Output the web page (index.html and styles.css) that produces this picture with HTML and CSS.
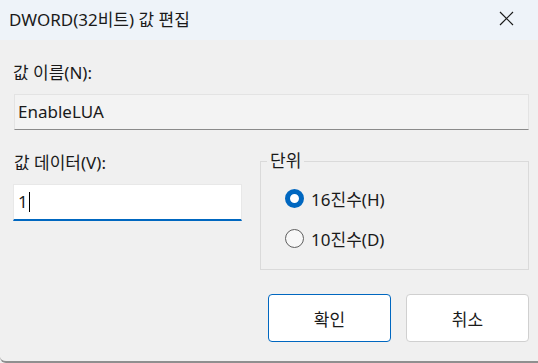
FILE: index.html
```html
<!DOCTYPE html>
<html lang="ko">
<head>
  <meta charset="UTF-8">
  <title>DWORD(32비트) 값 편집</title>
  <link rel="stylesheet" href="styles.css">
</head>
<body>
  <div class="dialog">
    <div class="titlebar">
      <span class="title">DWORD(32비트) 값 편집</span>
      <svg class="close" width="15" height="15" viewBox="0 0 15 15">
        <path d="M1 1 L14 14 M14 1 L1 14" stroke="#1a1a1a" stroke-width="1.2" fill="none"/>
      </svg>
    </div>

    <div class="content">
      <div class="label">값 이름(N):</div>
      <div class="field readonly">EnableLUA</div>

      <div class="row">
        <div class="data-col">
          <div class="label">값 데이터(V):</div>
          <div class="field edit">1<span class="caret"></span></div>
        </div>

        <fieldset class="group">
          <legend>단위</legend>
          <div class="radio checked"><span class="dot"></span>16진수(H)</div>
          <div class="radio"><span class="dot"></span>10진수(D)</div>
        </fieldset>
      </div>

      <div class="buttons">
        <button class="btn primary">확인</button>
        <button class="btn">취소</button>
      </div>
    </div>
  </div>
</body>
</html>
```

FILE: styles.css
```css
html, body {
  margin: 0;
  padding: 0;
}

body {
  width: 538px;
  height: 363px;
  overflow: hidden;
  background-color: #f0f0f0;
  font-family: "Noto Sans", "Noto Sans CJK KR", sans-serif;
  font-size: 17px;
  color: #1a1a1a;
}

.dialog {
  height: 361px;
  background-color: #f0f0f0;
  border-bottom: 2px solid #8f8f8f;
  border-radius: 0 0 0 6px;
}

.titlebar {
  height: 40px;
  background-color: #eef3f9;
  display: flex;
  align-items: center;
  justify-content: space-between;
  padding: 0 24px 0 9px;
}

.title {
  font-size: 17px;
  margin-top: -3px;
}

.close {
  display: block;
  margin-top: -4px;
}

.content {
  padding: 23px 9px 0 13px;
}

.label {
  line-height: 20px;
  height: 20px;
}

.field {
  box-sizing: border-box;
  height: 36px;
  line-height: 34px;
  padding: 0 3px;
  margin-top: 11px;
}

.readonly {
  margin-left: 1px;
  background-color: #f3f3f3;
  border: 1px solid #e3e3e3;
  border-bottom-color: #8a8a8a;
}

.row {
  display: flex;
  margin-top: 10px;
}

.data-col {
  width: 230px;
  padding-top: 13px;
}

.data-col .label {
  margin-left: 1px;
}

.edit {
  height: 37px;
  margin-top: 11px;
  background-color: #ffffff;
  border: 1px solid #e8e8e8;
  border-bottom: 2px solid #0067c0;
  padding-left: 4px;
}

.caret {
  display: inline-block;
  width: 1px;
  height: 20px;
  background-color: #000;
  vertical-align: middle;
  margin-left: 1px;
  margin-top: -3px;
}

.group {
  box-sizing: border-box;
  width: 270px;
  height: 119px;
  margin: 11px 0 0 18px;
  padding: 7px 0 0 0;
  border: 1px solid #dadada;
}

.group legend {
  padding: 0 3px;
  margin-left: 6px;
  line-height: 20px;
}

.radio {
  display: flex;
  align-items: center;
  height: 40px;
  gap: 7px;
  margin-left: 24px;
}

.dot {
  box-sizing: border-box;
  width: 19px;
  height: 19px;
  border-radius: 50%;
  border: 1px solid #5f5f5f;
  background-color: #f7f7f7;
}

.radio.checked .dot {
  border: 5px solid #0067c0;
  background-color: #ffffff;
}

.buttons {
  display: flex;
  justify-content: flex-end;
  gap: 15px;
  margin-top: 24px;
}

.btn {
  box-sizing: border-box;
  width: 123px;
  height: 48px;
  background-color: #ffffff;
  border: 1px solid #d0d0d0;
  border-radius: 4px;
  font-family: inherit;
  font-size: 17px;
  color: #1a1a1a;
}

.btn.primary {
  border-color: #0067c0;
}
```
